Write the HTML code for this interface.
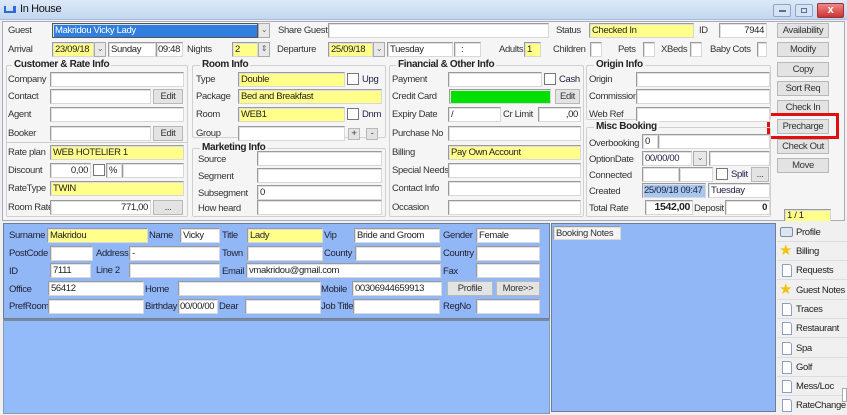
<!DOCTYPE html>
<html><head><meta charset="utf-8"><style>
*{margin:0;padding:0;box-sizing:border-box}
body{width:847px;height:414px;overflow:hidden;background:#f0f0f0;font-family:"Liberation Sans",sans-serif;font-size:10px;color:#222;position:relative;letter-spacing:-0.35px}
div,span{position:absolute}
.i{height:15px;background:#fff;border:1px solid;border-color:#9a9a9a #d8d8d8 #d8d8d8 #9a9a9a;box-shadow:inset 1px 1px 0 #e0e0e0;font-size:9.5px;line-height:13px;padding:0 2px;white-space:nowrap;overflow:hidden;color:#222}
.y{background:#ffff8a}
.r{text-align:right}
.l{font-size:9.5px;line-height:13px;white-space:nowrap;color:#333}
.b{height:15px;background:#e3e3e3;border:1px solid #b8b8b8;font-size:9.5px;line-height:13px;text-align:center;color:#333;white-space:nowrap}
.g{border:1px solid #d0d0d0;border-radius:2px}
.t{font-weight:bold;font-size:10px;background:#f5f5f5;padding:0 2px;line-height:12px;color:#222;white-space:nowrap}
.cb{width:12px;height:12px;background:#fff;border:1px solid #777}
.dd{width:12px;height:15px;background:#e8e8e8;border:1px solid #aaa;font-size:8px;line-height:12px;text-align:center;color:#666}
.bl .l{color:#223}
.tab{left:777px;width:70px;height:19px;background:#f0f0f0;border-bottom:1px solid #ddd;font-size:9.5px;line-height:19px;color:#222;white-space:nowrap;overflow:hidden}
.tab b{position:absolute;left:19px;top:0;font-weight:normal}
.pg{left:5px;top:3px;width:10px;height:13px;background:#fff;border:1px solid #8aa0c0;border-radius:0 3px 0 0}
.st{left:2px;top:1px;font-size:15px;color:#f4c20d;line-height:16px}
</style></head><body>
<div style="left:0;top:0;width:847px;height:20px;background:linear-gradient(#dce9f8,#c3d7f0);border-bottom:1px solid #aabbd4"></div>
<div style="left:4px;top:6px;width:12px;height:7px;border:2px solid #2b6bd6;border-top:none;border-right:3px solid #2b6bd6"></div>
<div class="l" style="left:20px;top:3px;font-size:11px;color:#111">In House</div>
<div style="left:773px;top:4px;width:18px;height:13px;border:1px solid #8fa7c6;background:#d5e3f4;border-radius:2px"></div>
<div style="left:779px;top:10px;width:7px;height:2px;background:#5a6f8c"></div>
<div style="left:795px;top:4px;width:18px;height:13px;border:1px solid #8fa7c6;background:#d5e3f4;border-radius:2px"></div>
<div style="left:801px;top:8px;width:6px;height:5px;border:1px solid #5a6f8c"></div>
<div style="left:817px;top:3px;width:27px;height:15px;background:linear-gradient(#e88,#c33);border:1px solid #933;border-radius:2px;color:#fff;font-weight:bold;font-size:11px;text-align:center;line-height:13px">x</div>
<div style="left:2px;top:21px;width:843px;height:200px;background:#f5f5f5;border:1px solid #aab"></div>

<div class="l" style="left:8px;top:24px">Guest</div>
<div class="i" style="left:52px;top:23px;width:206px;background:#2f7fe0;color:#fff;border-color:#555">Makridou Vicky Lady</div>
<div class="dd" style="left:258px;top:23px">&#8964;</div>
<div class="l" style="left:278px;top:24px">Share Guest</div>
<div class="i" style="left:328px;top:23px;width:221px"></div>
<div class="l" style="left:556px;top:24px">Status</div>
<div class="i y" style="left:589px;top:23px;width:105px">Checked In</div>
<div class="l" style="left:699px;top:24px">ID</div>
<div class="i r" style="left:719px;top:23px;width:48px">7944</div>

<div class="l" style="left:8px;top:43px">Arrival</div>
<div class="i y" style="left:52px;top:42px;width:42px">23/09/18</div>
<div class="dd" style="left:94px;top:42px">&#8964;</div>
<div class="i" style="left:108px;top:42px;width:48px">Sunday</div>
<div class="i" style="left:156px;top:42px;width:27px;padding:0 1px">09:48</div>
<div class="l" style="left:187px;top:43px">Nights</div>
<div class="i y" style="left:232px;top:42px;width:26px">2</div>
<div class="dd" style="left:258px;top:42px">&#8661;</div>
<div class="l" style="left:277px;top:43px">Departure</div>
<div class="i y" style="left:328px;top:42px;width:45px">25/09/18</div>
<div class="dd" style="left:373px;top:42px">&#8964;</div>
<div class="i" style="left:387px;top:42px;width:66px">Tuesday</div>
<div class="i" style="left:454px;top:42px;width:27px;padding-left:6px">:</div>
<div class="l" style="left:499px;top:43px">Adults</div>
<div class="i y" style="left:524px;top:42px;width:17px">1</div>
<div class="l" style="left:553px;top:43px">Children</div>
<div class="i" style="left:590px;top:42px;width:12px"></div>
<div class="l" style="left:618px;top:43px">Pets</div>
<div class="i" style="left:643px;top:42px;width:12px"></div>
<div class="l" style="left:661px;top:43px">XBeds</div>
<div class="i" style="left:690px;top:42px;width:12px"></div>
<div class="l" style="left:710px;top:43px">Baby Cots</div>
<div class="i" style="left:757px;top:42px;width:10px"></div>

<div class="b" style="left:777px;top:23px;width:52px">Availability</div>
<div class="b" style="left:777px;top:42px;width:52px">Modify</div>
<div class="b" style="left:777px;top:62px;width:52px">Copy</div>
<div class="b" style="left:777px;top:81px;width:52px">Sort Req</div>
<div class="b" style="left:777px;top:100px;width:52px">Check In</div>
<div style="left:767px;top:113px;width:72px;height:26px;border:3px solid #e01010"></div>
<div class="b" style="left:777px;top:119px;width:52px">Precharge</div>
<div class="b" style="left:777px;top:139px;width:52px">Check Out</div>
<div class="b" style="left:777px;top:158px;width:52px">Move</div>
<div class="i y" style="left:784px;top:209px;width:47px;height:13px;line-height:11px">1 / 1</div>

<div class="g" style="left:6px;top:65px;width:182px;height:152px"></div>
<div class="t" style="left:12px;top:59px">Customer &amp; Rate Info</div>
<div class="l" style="left:8px;top:73px">Company</div><div class="i" style="left:50px;top:72px;width:134px"></div>
<div class="l" style="left:8px;top:90px">Contact</div><div class="i" style="left:50px;top:89px;width:101px"></div><div class="b" style="left:153px;top:89px;width:30px">Edit</div>
<div class="l" style="left:8px;top:108px">Agent</div><div class="i" style="left:50px;top:107px;width:134px"></div>
<div class="l" style="left:8px;top:127px">Booker</div><div class="i" style="left:50px;top:126px;width:101px"></div><div class="b" style="left:153px;top:126px;width:30px">Edit</div>
<div style="left:6px;top:142px;width:182px;height:1px;background:#ccc"></div>
<div class="l" style="left:8px;top:146px">Rate plan</div><div class="i y" style="left:50px;top:145px;width:134px">WEB HOTELIER 1</div>
<div class="l" style="left:8px;top:164px">Discount</div><div class="i r" style="left:50px;top:163px;width:41px">0,00</div><div class="cb" style="left:93px;top:164px"></div><div class="i" style="left:106px;top:163px;width:16px">%</div><div class="i" style="left:122px;top:163px;width:62px"></div>
<div class="l" style="left:8px;top:182px">RateType</div><div class="i y" style="left:50px;top:181px;width:134px">TWIN</div>
<div class="l" style="left:8px;top:201px">Room Rate</div><div class="i r" style="left:50px;top:200px;width:101px">771,00</div><div class="b" style="left:153px;top:200px;width:30px">...</div>

<div class="g" style="left:192px;top:65px;width:194px;height:73px"></div>
<div class="t" style="left:200px;top:59px">Room Info</div>
<div class="l" style="left:196px;top:73px">Type</div><div class="i y" style="left:238px;top:72px;width:107px">Double</div><div class="cb" style="left:347px;top:73px"></div><div class="l" style="left:362px;top:73px;color:#224">Upg</div>
<div class="l" style="left:196px;top:90px">Package</div><div class="i y" style="left:238px;top:89px;width:144px">Bed and Breakfast</div>
<div class="l" style="left:196px;top:108px">Room</div><div class="i y" style="left:238px;top:107px;width:107px">WEB1</div><div class="cb" style="left:347px;top:108px"></div><div class="l" style="left:362px;top:108px;color:#224">Dnm</div>
<div class="l" style="left:196px;top:127px">Group</div><div class="i" style="left:238px;top:126px;width:107px"></div><div class="b" style="left:348px;top:128px;width:12px;height:12px;line-height:10px">+</div><div class="b" style="left:366px;top:128px;width:12px;height:12px;line-height:10px">-</div>
<div class="g" style="left:192px;top:148px;width:194px;height:69px"></div>
<div class="t" style="left:200px;top:142px">Marketing Info</div>
<div class="l" style="left:198px;top:153px">Source</div><div class="i" style="left:257px;top:151px;width:125px"></div>
<div class="l" style="left:198px;top:170px">Segment</div><div class="i" style="left:257px;top:168px;width:125px"></div>
<div class="l" style="left:198px;top:187px">Subsegment</div><div class="i" style="left:257px;top:185px;width:125px">0</div>
<div class="l" style="left:198px;top:202px">How heard</div><div class="i" style="left:257px;top:200px;width:125px"></div>

<div class="g" style="left:389px;top:65px;width:195px;height:152px"></div>
<div class="t" style="left:396px;top:59px">Financial &amp; Other Info</div>
<div class="l" style="left:392px;top:73px">Payment</div><div class="i" style="left:448px;top:72px;width:94px"></div><div class="cb" style="left:544px;top:73px"></div><div class="l" style="left:559px;top:73px;color:#224">Cash</div>
<div class="l" style="left:392px;top:90px">Credit Card</div><div class="i" style="left:449px;top:89px;width:102px;background:#00e000"></div><div class="b" style="left:555px;top:89px;width:25px">Edit</div>
<div class="l" style="left:392px;top:108px">Expiry Date</div><div class="i" style="left:448px;top:107px;width:53px">/</div><div class="l" style="left:503px;top:108px">Cr Limit</div><div class="i r" style="left:538px;top:107px;width:43px">,00</div>
<div class="l" style="left:392px;top:127px">Purchase No</div><div class="i" style="left:448px;top:126px;width:133px"></div>
<div class="l" style="left:392px;top:146px">Billing</div><div class="i y" style="left:448px;top:145px;width:133px">Pay Own Account</div>
<div class="l" style="left:392px;top:164px">Special Needs</div><div class="i" style="left:448px;top:163px;width:133px"></div>
<div class="l" style="left:392px;top:182px">Contact Info</div><div class="i" style="left:448px;top:181px;width:133px"></div>
<div class="l" style="left:392px;top:201px">Occasion</div><div class="i" style="left:448px;top:200px;width:133px"></div>

<div class="g" style="left:586px;top:65px;width:185px;height:55px"></div>
<div class="t" style="left:594px;top:59px">Origin Info</div>
<div class="l" style="left:589px;top:73px">Origin</div><div class="i" style="left:636px;top:72px;width:134px"></div>
<div class="l" style="left:589px;top:90px">Commission</div><div class="i" style="left:636px;top:89px;width:134px"></div>
<div class="l" style="left:589px;top:108px">Web Ref</div><div class="i" style="left:636px;top:107px;width:134px"></div>
<div class="g" style="left:586px;top:127px;width:185px;height:90px"></div>
<div class="t" style="left:594px;top:121px">Misc Booking</div>
<div class="l" style="left:589px;top:137px;width:52px;overflow:hidden">Overbooking</div><div class="i" style="left:642px;top:134px;width:16px">0</div><div class="i" style="left:658px;top:134px;width:112px"></div>
<div class="l" style="left:589px;top:153px">OptionDate</div><div class="i" style="left:642px;top:151px;width:50px;color:#224">00/00/00</div><div class="dd" style="left:693px;top:151px;width:14px">&#8964;</div><div class="i" style="left:709px;top:151px;width:61px"></div>
<div class="l" style="left:589px;top:169px">Connected</div><div class="i" style="left:642px;top:167px;width:37px"></div><div class="i" style="left:679px;top:167px;width:34px"></div><div class="cb" style="left:716px;top:168px"></div><div class="l" style="left:731px;top:168px;color:#224">Split</div><div class="b" style="left:751px;top:167px;width:18px">...</div>
<div class="l" style="left:589px;top:185px">Created</div><div class="i" style="left:642px;top:183px;width:64px;background:#a6c8ee;color:#224;padding:0 1px">25/09/18 09:47</div><div class="i" style="left:708px;top:183px;width:62px;color:#224">Tuesday</div>
<div class="l" style="left:589px;top:202px">Total Rate</div><div class="i r" style="left:645px;top:200px;width:48px;font-weight:bold;font-size:10.5px">1542,00</div><div class="l" style="left:694px;top:202px">Deposit</div><div class="i r" style="left:725px;top:200px;width:45px;font-weight:bold">0</div>

<div style="left:0;top:221px;width:847px;height:193px;background:#f0f0f0"></div>
<div style="left:3px;top:223px;width:547px;height:96px;background:#91b7f7;border:1px solid #6b7f99"></div>
<div style="left:3px;top:319px;width:547px;height:95px;background:#94bbf9;border:1px solid #8a9ab0;border-top:2px solid #7a8aa0"></div>
<div class="bl">
<div class="l" style="left:9px;top:229px">Surname</div><div class="i y" style="left:47px;top:228px;width:101px">Makridou</div>
<div class="l" style="left:149px;top:229px">Name</div><div class="i" style="left:180px;top:228px;width:40px">Vicky</div>
<div class="l" style="left:222px;top:229px">Title</div><div class="i y" style="left:247px;top:228px;width:76px">Lady</div>
<div class="l" style="left:324px;top:229px">Vip</div><div class="i" style="left:354px;top:228px;width:86px">Bride and Groom</div>
<div class="l" style="left:443px;top:229px">Gender</div><div class="i" style="left:476px;top:228px;width:64px">Female</div>

<div class="l" style="left:9px;top:247px">PostCode</div><div class="i" style="left:50px;top:246px;width:43px"></div>
<div class="l" style="left:96px;top:247px">Address</div><div class="i" style="left:129px;top:246px;width:91px">-</div>
<div class="l" style="left:222px;top:247px">Town</div><div class="i" style="left:247px;top:246px;width:76px"></div>
<div class="l" style="left:324px;top:247px">County</div><div class="i" style="left:355px;top:246px;width:86px"></div>
<div class="l" style="left:443px;top:247px">Country</div><div class="i" style="left:476px;top:246px;width:64px"></div>

<div class="l" style="left:9px;top:265px">ID</div><div class="i" style="left:50px;top:263px;width:41px">7111</div>
<div class="l" style="left:96px;top:264px">Line 2</div><div class="i" style="left:129px;top:263px;width:91px"></div>
<div class="l" style="left:222px;top:265px">Email</div><div class="i" style="left:246px;top:263px;width:195px">vmakridou@gmail.com</div>
<div class="l" style="left:443px;top:265px">Fax</div><div class="i" style="left:476px;top:263px;width:64px"></div>

<div class="l" style="left:9px;top:283px">Office</div><div class="i" style="left:48px;top:281px;width:96px">56412</div>
<div class="l" style="left:145px;top:283px">Home</div><div class="i" style="left:178px;top:281px;width:143px"></div>
<div class="l" style="left:321px;top:283px">Mobile</div><div class="i" style="left:352px;top:281px;width:90px">00306944659913</div>
<div class="b" style="left:447px;top:281px;width:46px">Profile</div><div class="b" style="left:496px;top:281px;width:44px">More&gt;&gt;</div>

<div class="l" style="left:9px;top:300px">PrefRoom</div><div class="i" style="left:48px;top:299px;width:96px"></div>
<div class="l" style="left:145px;top:300px">Birthday</div><div class="i" style="left:178px;top:299px;width:40px;padding:0 1px">00/00/00</div>
<div class="l" style="left:219px;top:300px">Dear</div><div class="i" style="left:245px;top:299px;width:76px"></div>
<div class="l" style="left:321px;top:300px">Job Title</div><div class="i" style="left:353px;top:299px;width:87px"></div>
<div class="l" style="left:443px;top:300px">RegNo</div><div class="i" style="left:476px;top:299px;width:64px"></div>
</div>

<div style="left:551px;top:223px;width:225px;height:189px;background:#91b7f7;border:1px solid #6b7f99"></div>
<div class="i" style="left:553px;top:226px;width:68px;height:14px;background:#f4f4f4;color:#333">Booking Notes</div>

<div class="tab" style="top:223px"><span style="left:3px;top:4px;width:13px;height:10px;border:1px solid #7b8fa8;background:#dde6f0;border-radius:2px"></span><b>Profile</b></div>
<div class="tab" style="top:242px"><span class="st">&#9733;</span><b>Billing</b></div>
<div class="tab" style="top:261px"><span class="pg"></span><b>Requests</b></div>
<div class="tab" style="top:281px"><span class="st">&#9733;</span><b>Guest Notes</b></div>
<div class="tab" style="top:300px"><span class="pg"></span><b>Traces</b></div>
<div class="tab" style="top:319px"><span class="pg"></span><b>Restaurant</b></div>
<div class="tab" style="top:339px"><span class="pg"></span><b>Spa</b></div>
<div class="tab" style="top:358px"><span class="pg"></span><b>Golf</b></div>
<div class="tab" style="top:377px"><span class="pg"></span><b>Mess/Loc</b></div>
<div class="tab" style="top:396px;border-bottom:none"><span class="pg"></span><b>RateChange</b></div>
<div style="left:842px;top:388px;width:5px;height:14px;background:#fff;border:1px solid #aaa"></div>
</body></html>
